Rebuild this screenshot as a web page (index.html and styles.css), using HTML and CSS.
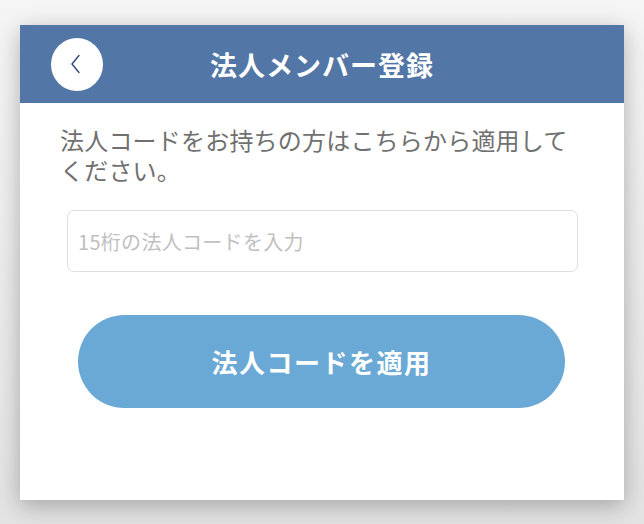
FILE: index.html
```html
<!DOCTYPE html>
<html lang="ja">
<head>
    <meta charset="UTF-8">
    <meta name="viewport" content="width=device-width, initial-scale=1.0">
    <title>法人メンバー登録</title>
    <link rel="stylesheet" href="styles.css">
</head>
<body>
  <div class="card">
    <header class="bar">
      <button class="back" type="button" aria-label="戻る">
        <svg width="12" height="20" viewBox="0 0 12 20">
          <path d="M9 1.5 L2 10 L9 18.5" fill="none" stroke="#2b477a" stroke-width="1.4" stroke-linecap="round" stroke-linejoin="round"/>
        </svg>
      </button>
      <h1 class="title">法人メンバー登録</h1>
      <span></span>
    </header>
    <main class="content">
      <p class="lead">法人コードをお持ちの方はこちらから適用してください。</p>
      <input class="code" type="text" placeholder="15桁の法人コードを入力">
      <button class="apply" type="button">法人コードを適用</button>
    </main>
  </div>
</body>
</html>
```

FILE: styles.css
```css
* {
  box-sizing: border-box;
}

body {
  margin: 0;
  height: 524px;
  padding: 25px 20px 0;
  background-image: linear-gradient(#f5f5f5, #e3e3e3);
  font-family: "Noto Sans CJK JP", "Noto Sans", sans-serif;
}

.card {
  width: 604px;
  height: 475px;
  background: #fff;
  box-shadow: 0 6px 22px rgba(0, 0, 0, 0.28);
}

.bar {
  height: 78px;
  background: #5276a6;
  display: grid;
  grid-template-columns: 1fr auto 1fr;
  align-items: center;
  padding: 0 31px;
}

.back {
  width: 52px;
  height: 53px;
  border-radius: 50%;
  border: none;
  background: #fff;
  padding: 0 2px 0 0;
  display: flex;
  align-items: center;
  justify-content: center;
}

.title {
  margin: 0;
  color: #fff;
  font-size: 27px;
  font-weight: 700;
  letter-spacing: 1px;
}

.content {
  padding: 22px 40px 0;
  display: flex;
  flex-direction: column;
}

.lead {
  margin: 0;
  font-size: 24px;
  line-height: 30px;
  letter-spacing: 0.2px;
  color: #707070;
}

.code {
  margin: 25px 6px 0 7px;
  height: 62px;
  border: 1px solid #dedede;
  border-radius: 7px;
  padding: 0 10px;
  font-family: inherit;
  font-size: 20px;
  letter-spacing: 0.3px;
  color: #333;
}

.code::placeholder {
  color: #c0c0c0;
}

.apply {
  margin: 43px 19px 0 18px;
  height: 93px;
  border: none;
  border-radius: 47px;
  background: #6aa9d6;
  color: #fff;
  font-family: inherit;
  font-size: 26px;
  font-weight: 700;
  letter-spacing: 1.5px;
}
```
